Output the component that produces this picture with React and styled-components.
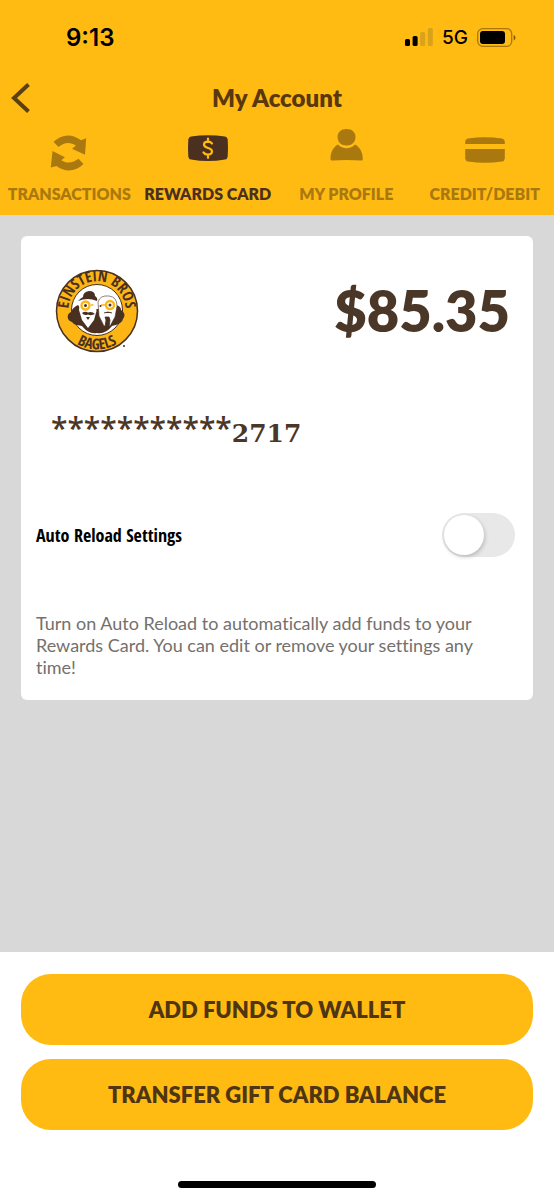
import React, { useState } from 'react'
import styled, { createGlobalStyle } from 'styled-components'

const GlobalStyle = createGlobalStyle`
  * {
    box-sizing: border-box;
  }
  body {
    margin: 0;
    font-family: Lato, 'Open Sans', sans-serif;
    color: #4b3728;
    background-color: white;
  }
`

const SignalIcon = () => (
  <svg width='28' height='18' viewBox='0 0 28 18' aria-hidden='true'>
    <rect x='0' y='11' width='5' height='7' rx='1.5' />
    <rect x='7.6' y='8' width='5' height='10' rx='1.5' />
    <rect x='15.2' y='4' width='5' height='14' rx='1.5' fill='#d9a21c' />
    <rect x='22.8' y='0' width='5' height='18' rx='1.5' fill='#d9a21c' />
  </svg>
)

const BatteryIcon = () => (
  <svg width='39' height='19' viewBox='0 0 39 19' aria-hidden='true'>
    <rect x='0.7' y='0.7' width='34' height='17.6' rx='5' fill='none' stroke='#a9780c' strokeWidth='1.3' />
    <rect x='3' y='3' width='25' height='13' rx='3' />
    <path d='M36.7 7v5.4q1.8-.8 1.8-2.7T36.7 7z' fill='#7a580c' />
  </svg>
)

const BackIcon = () => (
  <svg width='20' height='30' viewBox='0 0 20 30' aria-hidden='true'>
    <path d='M18.5 1.5L4 15l14.5 13.5' fill='none' stroke='currentColor' strokeWidth='4' />
  </svg>
)

const TransactionsIcon = () => (
  <svg width='40' height='36' viewBox='0 0 40 36' fill='currentColor' aria-hidden='true'>
    <path d='M4.5 6.8C12-.8 23-2 32 5.2L37.2 3.3 36 19.8 23 13.8 27 10.5C21.5 7 15.5 7 9.5 12z' />
    <path d='M34.5 29C27 36.8 16 37.5 7.5 31L1.8 32.5 3.5 16 16 22.2 12.3 25.2C18 28.8 24 28 29.5 23.8z' />
  </svg>
)

const RewardsIcon = () => (
  <svg width='40' height='36' viewBox='0 0 40 36' aria-hidden='true'>
    <path d='M3 1.5Q20-1 37 1.5 39.5 2 39.7 4.5 40.3 13 39.7 21.5 39.5 24 37 24.5 20 27.5 3 24.5.5 24 .3 21.5-.3 13 .3 4.5.5 2 3 1.5z' fill='currentColor' />
    <path d='M24 8.5Q22.5 6.7 20 6.7 16 6.8 16 9.6 16 12 20 13 24 14 24 16.6 24 19.5 20 19.6 17 19.6 15.5 17.5M20 3.5v3.2M20 19.6v3.2' fill='none' stroke='#ffbb12' strokeWidth='2.2' strokeLinecap='round' />
  </svg>
)

const ProfileIcon = () => (
  <svg width='40' height='36' viewBox='0 0 40 36' fill='currentColor' aria-hidden='true'>
    <g transform='translate(0 -6)'>
      <path d='M20.5 0C26 0 29.5 3.3 29.5 8c0 5-3.9 8.5-9 8.5S11.5 13 11.5 8c0-4.7 3.500-8 9-8z' />
      <path d='M12 15.5C16.5 20.5 24.5 20.5 29 15.5 34 18 36.8 23.5 36.8 30q0 1.5-1.5 1.6-14.8-1.2-29.3 0-1.5 0-1.5-1.6C4.5 23.5 7 18 12 15.5z' />
    </g>
  </svg>
)

const CreditIcon = () => (
  <svg width='40' height='36' viewBox='0 0 40 36' fill='currentColor' aria-hidden='true'>
    <g transform='translate(0 2)'>
      <path d='M.2 7V4.5Q.4 1.8 3 1.5 20-.8 37 1.5 39.6 1.8 39.8 4.5V7z' />
      <path d='M.2 12h39.6v9.5q-.2 2.6-2.8 3-17 2.6-34 0-2.6-.4-2.8-3z' />
    </g>
  </svg>
)

const BrandLogo = () => (
  <LogoSvg width='84' height='84' viewBox='0 0 84 84' role='img' aria-label='Einstein Bros Bagels'>
    <defs>
      <path id='logoTop' d='M14 46A28.500 28.500 0 1 1 70 46' />
      <path id='logoBottom' d='M3.5 42A38.5 38.5 0 0 0 80.5 42' />
    </defs>
    <circle cx='42' cy='42' r='40.5' fill='#fdb515' stroke='#4a3020' strokeWidth='1.5' />
    <circle cx='42' cy='41' r='25.5' fill='white' stroke='#4a3020' strokeWidth='1' />
    {/* coats */}
    <path d='M23 36C19 38 17 40 16 43 11 45 12 52 17 53 20 57 24 56 27 57 31 62 36 65 42 64 48 65 53 62 57 57 62 56 67 54 68 50 71 46 69 43 66 41 66 38 64 37 61 36L58 40H26z' fill='#4a3020' />
    {/* left face with hat and beard */}
    <path d='M25 31Q33 28 41 32L41.5 42 39 51 33 59 27 51 24 41z' fill='white' />
    <path d='M23 32Q26 29 28 28 28 23 34 22 40 22 40 27 43 29 42 32 33 28 23 32z' fill='#4a3020' />
    <path d='M27 44Q30 42 33 43.5 37 42 40 45 36 47 33 45.5 29 47 27 44zM31 48h4l-2 3z' fill='#4a3020' />
    {/* right face with tie */}
    <path d='M43 33Q45 26 54 27 62 28 62 37L60 48 55 57 49 57 44 47z' fill='white' stroke='#4a3020' strokeWidth='.6' />
    <path d='M49 44q4-2 8 0M50 48h4l1 3-1 7-2 3-2-3 1-7z' fill='#4a3020' stroke='#4a3020' strokeWidth='.8' />
    <g fill='white' stroke='#fdb515' strokeWidth='2.4'>
      <circle cx='30.5' cy='36.5' r='4' />
      <circle cx='55' cy='36' r='4' />
      <path d='M36 36h2.5M46 36h4' strokeWidth='1.5' />
    </g>
    <g fill='#4a3020'>
      <circle cx='30.5' cy='36.5' r='1.5' />
      <circle cx='55' cy='36' r='1.5' />
      <circle cx='45.5' cy='37' r='1' />
    </g>
    <LogoText>
      <textPath href='#logoTop' startOffset='50%' textAnchor='middle'>EINSTEIN BROS</textPath>
    </LogoText>
    <LogoText>
      <textPath href='#logoBottom' startOffset='50%' textAnchor='middle'>BAGELS</textPath>
    </LogoText>
    <circle cx='69' cy='77' r='1' fill='#4a3020' />
  </LogoSvg>
)

const tabs = [
  { name: 'TRANSACTIONS', Icon: TransactionsIcon },
  { name: 'REWARDS CARD', Icon: RewardsIcon },
  { name: 'MY PROFILE', Icon: ProfileIcon },
  { name: 'CREDIT/DEBIT', Icon: CreditIcon },
]

function App() {
  const [activeTab, setActiveTab] = useState('REWARDS CARD')
  const [autoReload, setAutoReload] = useState(false)

  const onAutoReloadChange = e => {
    setAutoReload(e.target.checked)
  }

  return (
    <Page>
      <GlobalStyle />
      <Header>
        <StatusBar>
          <Time>9:13</Time>
          <StatusIcons>
            <SignalIcon />
            <Network>5G</Network>
            <BatteryIcon />
          </StatusIcons>
        </StatusBar>
        <TitleBar>
          <BackButton aria-label='Back'>
            <BackIcon />
          </BackButton>
          <Title>My Account</Title>
        </TitleBar>
        <Tabs>
          {tabs.map(({ name, Icon }) => (
            <Tab key={name} $active={name === activeTab} onClick={() => setActiveTab(name)}>
              <Icon />
              {name}
            </Tab>
          ))}
        </Tabs>
      </Header>

      <Content>
        <Card>
          <BalanceRow>
            <BrandLogo />
            <Balance>$85.35</Balance>
          </BalanceRow>
          <CardNumber>
            <Mask>***********</Mask>
            <span>2717</span>
          </CardNumber>
          <SettingRow>
            <SettingLabel htmlFor='autoReload'>Auto Reload Settings</SettingLabel>
            <Toggle id='autoReload' type='checkbox' checked={autoReload} onChange={onAutoReloadChange} />
          </SettingRow>
          <Description>
            Turn on Auto Reload to automatically add funds to your Rewards Card. You can edit or remove your settings any time!
          </Description>
        </Card>
      </Content>

      <Footer>
        <ActionButton>ADD FUNDS TO WALLET</ActionButton>
        <ActionButton>TRANSFER GIFT CARD BALANCE</ActionButton>
        <HomeIndicator />
      </Footer>
    </Page>
  )
}

const Page = styled.div`
  min-height: 100vh;
  display: flex;
  flex-direction: column;
`

const Header = styled.header`
  background-color: #ffbb12;
`

const StatusBar = styled.div`
  display: flex;
  align-items: center;
  justify-content: space-between;
  height: 74px;
  padding: 0 38px 0 66px;
  color: black;
  font-family: Inter, sans-serif;
`

const Time = styled.span`
  font-size: 24px;
  font-weight: 600;
`

const StatusIcons = styled.div`
  display: flex;
  align-items: center;
  gap: 9px;
`

const Network = styled.span`
  font-size: 19px;
  font-weight: 500;
`

const TitleBar = styled.div`
  display: grid;
  grid-template-columns: 48px 1fr 48px;
  align-items: center;
  height: 48px;
`

const BackButton = styled.button`
  display: flex;
  padding: 8px 10px;
  border: 0;
  background: none;
  color: #5a4012;
  cursor: pointer;
`

const Title = styled.h1`
  margin: 0;
  font-size: 24px;
  font-weight: 800;
  line-height: 28px;
  text-align: center;
  color: #59380f;
`

const Tabs = styled.nav`
  display: grid;
  grid-template-columns: repeat(4, 1fr);
`

const Tab = styled.button`
  display: flex;
  flex-direction: column;
  align-items: center;
  gap: 13px;
  padding: 13px 0 11px;
  border: 0;
  background: none;
  font-family: inherit;
  font-size: 16px;
  font-weight: 800;
  line-height: 20px;
  white-space: nowrap;
  color: ${props => (props.$active ? '#4b3020' : '#a9790f')};
  cursor: pointer;
  svg {
    overflow: visible;
  }
`

const Content = styled.main`
  flex: 1;
  padding: 21px;
  background-color: #d8d8d8;
`

const Card = styled.section`
  padding: 32px 15px 22px;
  border-radius: 6px;
  background-color: white;
`

const BalanceRow = styled.div`
  display: flex;
  align-items: center;
  justify-content: space-between;
  padding: 0 8px 0 19px;
`

const LogoSvg = styled.svg`
  overflow: visible;
`

const LogoText = styled.text`
  font-family: 'Open Sans Condensed', 'Liberation Sans Narrow', 'Liberation Sans', sans-serif;
  font-size: 15px;
  font-weight: 700;
  fill: #4a3020;
`

const Balance = styled.strong`
  font-size: 56px;
  font-weight: 800;
  line-height: 86px;
`

const CardNumber = styled.div`
  display: flex;
  align-items: flex-end;
  height: 94px;
  margin-bottom: 65px;
  padding-left: 15px;
  font-family: 'DejaVu Serif', serif;
  font-size: 25px;
  font-weight: 700;
  line-height: 28px;
`

const Mask = styled.span`
  font-family: 'Open Sans', sans-serif;
  font-size: 30px;
  font-weight: 600;
  line-height: 40px;
`

const SettingRow = styled.div`
  display: flex;
  align-items: center;
  justify-content: space-between;
  padding-right: 3px;
`

const SettingLabel = styled.label`
  font-family: 'Open Sans Condensed', 'Liberation Sans Narrow', 'Liberation Sans', sans-serif;
  font-size: 18px;
  font-weight: 700;
  color: black;
`

const Toggle = styled.input`
  appearance: none;
  display: flex;
  justify-content: ${props => (props.checked ? 'flex-end' : 'flex-start')};
  width: 73px;
  height: 44px;
  margin: 0;
  padding: 2px;
  border-radius: 22px;
  background-color: ${props => (props.checked ? '#ffbb12' : '#e8e8e8')};
  cursor: pointer;
  &::before {
    content: '';
    width: 40px;
    height: 40px;
    border-radius: 50%;
    background-color: white;
    box-shadow: 1px 2px 4px rgba(0, 0, 0, 0.2);
  }
`

const Description = styled.p`
  margin: 55px 0 0;
  padding-right: 24px;
  font-size: 18px;
  line-height: 22px;
  font-variant-ligatures: none;
  color: #75706c;
`

const Footer = styled.footer`
  display: flex;
  flex-direction: column;
  gap: 14px;
  padding: 22px 21px 12px;
  background-color: white;
`

const ActionButton = styled.button`
  height: 71px;
  border: 0;
  border-radius: 30px;
  background-color: #ffbb12;
  font-family: inherit;
  font-size: 22px;
  font-weight: 800;
  color: #4f3512;
  cursor: pointer;
`

const HomeIndicator = styled.div`
  align-self: center;
  width: 198px;
  height: 7px;
  margin-top: 37px;
  border-radius: 4px;
  background-color: black;
`

export default App
